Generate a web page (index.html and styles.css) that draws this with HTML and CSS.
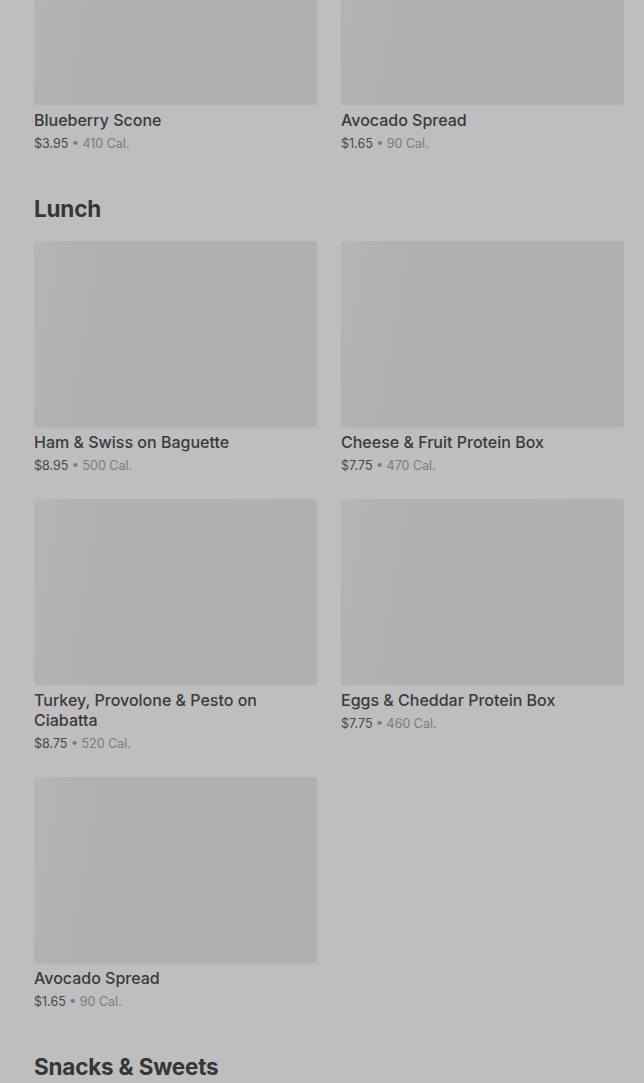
FILE: index.html
```html
<!DOCTYPE html>
<html lang="en">
<head>
  <meta charset="UTF-8" />
  <meta name="viewport" content="width=device-width, initial-scale=1.0"/>
  <title>Menu</title>
  <link rel="stylesheet" href="styles.css">
</head>
<body>
  <div class="menu">
    <section class="menu-section">
      <div class="items">
        <div class="item">
          <div class="item-img"></div>
          <div class="item-name">Blueberry Scone</div>
          <div class="item-meta"><span class="price">$3.95</span> • 410 Cal.</div>
        </div>
        <div class="item">
          <div class="item-img"></div>
          <div class="item-name">Avocado Spread</div>
          <div class="item-meta"><span class="price">$1.65</span> • 90 Cal.</div>
        </div>
      </div>
    </section>

    <section class="menu-section">
      <h2 class="section-title">Lunch</h2>
      <div class="items">
        <div class="item">
          <div class="item-img"></div>
          <div class="item-name">Ham &amp; Swiss on Baguette</div>
          <div class="item-meta"><span class="price">$8.95</span> • 500 Cal.</div>
        </div>
        <div class="item">
          <div class="item-img"></div>
          <div class="item-name">Cheese &amp; Fruit Protein Box</div>
          <div class="item-meta"><span class="price">$7.75</span> • 470 Cal.</div>
        </div>
        <div class="item">
          <div class="item-img"></div>
          <div class="item-name">Turkey, Provolone &amp; Pesto on Ciabatta</div>
          <div class="item-meta"><span class="price">$8.75</span> • 520 Cal.</div>
        </div>
        <div class="item">
          <div class="item-img"></div>
          <div class="item-name">Eggs &amp; Cheddar Protein Box</div>
          <div class="item-meta"><span class="price">$7.75</span> • 460 Cal.</div>
        </div>
        <div class="item">
          <div class="item-img"></div>
          <div class="item-name">Avocado Spread</div>
          <div class="item-meta"><span class="price">$1.65</span> • 90 Cal.</div>
        </div>
      </div>
    </section>

    <section class="menu-section">
      <h2 class="section-title">Snacks &amp; Sweets</h2>
    </section>
  </div>
</body>
</html>
```

FILE: styles.css
```css
* {
  box-sizing: border-box;
  margin: 0;
  padding: 0;
}

body {
  background: #bebebe;
  font-family: 'Inter', 'Liberation Sans', sans-serif;
  color: #393939;
  overflow: hidden;
}

.menu {
  margin-top: -81px;
  padding: 0 20px 0 34px;
  display: flex;
  flex-direction: column;
  gap: 42px;
}

.section-title {
  font-size: 22.5px;
  line-height: 28px;
  font-weight: 700;
  letter-spacing: -0.2px;
  color: #363636;
  margin-bottom: 18px;
}

.items {
  display: grid;
  grid-template-columns: repeat(2, 1fr);
  column-gap: 24px;
  row-gap: 24px;
  align-items: start;
}

.item-img {
  height: 187px;
  border-radius: 3px;
  background: linear-gradient(100deg, #b6b6b6 0, #b1b1b1 45px, #b0b0b0 100%);
  border-bottom: 2px solid #b6b6b6;
}

.item-name {
  margin-top: 4px;
  font-size: 16px;
  line-height: 20px;
  font-weight: 500;
  color: #3a3a3a;
}

.item-meta {
  margin-top: 5px;
  font-size: 12.5px;
  line-height: 18px;
  color: #7b7b7b;
}

.price {
  color: #474747;
}
```
